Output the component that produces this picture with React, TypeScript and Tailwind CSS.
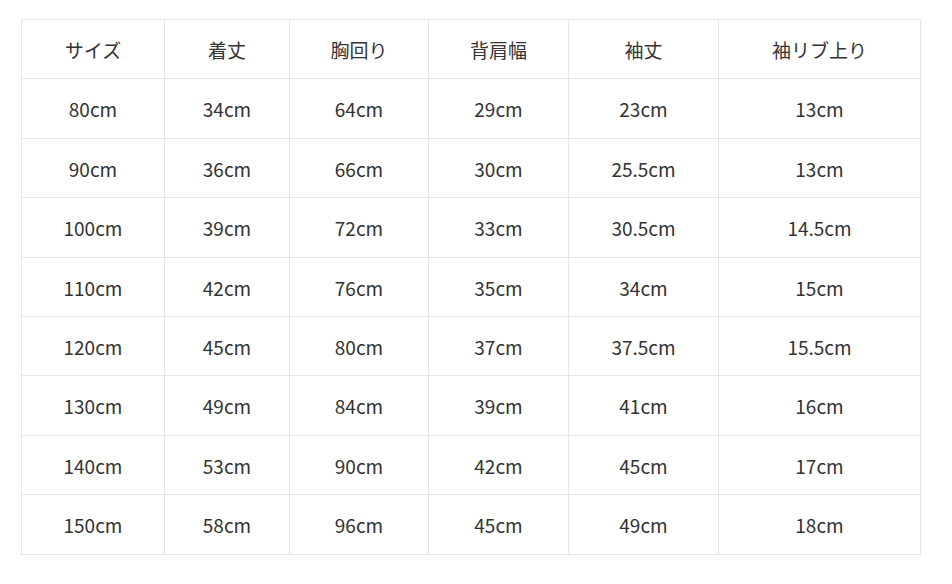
import * as React from 'react';

const headers = ['サイズ', '着丈', '胸回り', '背肩幅', '袖丈', '袖リブ上り'];

const rows = [
  ['80cm', '34cm', '64cm', '29cm', '23cm', '13cm'],
  ['90cm', '36cm', '66cm', '30cm', '25.5cm', '13cm'],
  ['100cm', '39cm', '72cm', '33cm', '30.5cm', '14.5cm'],
  ['110cm', '42cm', '76cm', '35cm', '34cm', '15cm'],
  ['120cm', '45cm', '80cm', '37cm', '37.5cm', '15.5cm'],
  ['130cm', '49cm', '84cm', '39cm', '41cm', '16cm'],
  ['140cm', '53cm', '90cm', '42cm', '45cm', '17cm'],
  ['150cm', '58cm', '96cm', '45cm', '49cm', '18cm'],
];

const widths = ['w-[143px]', 'w-[125px]', 'w-[139px]', 'w-[140px]', 'w-[150px]', 'w-[202px]'];

export default function App() {
  return (
    <div className="min-h-[584px] w-[952px] bg-white pl-[21px] pt-[19px] font-['Noto_Sans_CJK_JP','Noto_Sans',sans-serif] text-[19px] text-[#333333]">
      <table className="w-[900px] table-fixed border-collapse">
        <colgroup>
          {widths.map((w, i) => (
            <col key={i} className={w} />
          ))}
        </colgroup>
        <thead>
          <tr className="h-[59.4px]">
            {headers.map((h) => (
              <th key={h} className="border border-[#e6e6e6] p-0 pt-[2px] text-center font-normal">
                {h}
              </th>
            ))}
          </tr>
        </thead>
        <tbody>
          {rows.map((r, ri) => (
            <tr key={ri} className="h-[59.4px]">
              {r.map((c, ci) => (
                <td key={ci} className="border border-[#e6e6e6] p-0 pt-[2px] text-center">
                  {c}
                </td>
              ))}
            </tr>
          ))}
        </tbody>
      </table>
    </div>
  );
}
